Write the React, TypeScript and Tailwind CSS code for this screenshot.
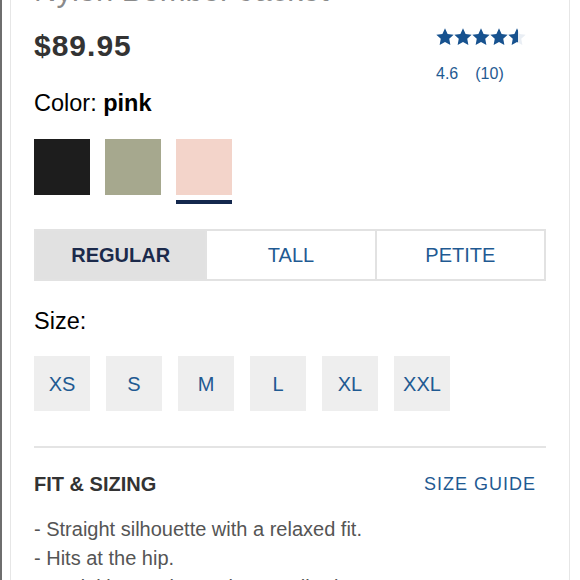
import { useId } from 'react';

const STAR = '12,2.2 15,8.6 22,9.5 16.9,14.3 18.2,21.3 12,17.9 5.8,21.3 7.1,14.3 2,9.5 9,8.6';

function Star({ fill }: { fill: number }) {
  const id = useId();
  return (
    <svg width="18" height="18" viewBox="1.6 1.8 20.8 20.8">
      <defs>
        <linearGradient id={id}>
          <stop offset={fill} stopColor="#17528f" />
          <stop offset={fill} stopColor="#e9eef4" />
        </linearGradient>
      </defs>
      <polygon points={STAR} fill={`url(#${id})`} />
    </svg>
  );
}

const swatches = [
  { name: 'black', color: 'bg-[#1d1d1d]' },
  { name: 'olive', color: 'bg-[#a6a88e]' },
  { name: 'pink', color: 'bg-[#f3d4ca]' },
];

const sizes = ['XS', 'S', 'M', 'L', 'XL', 'XXL'];

const bullets = [
  '- Straight silhouette with a relaxed fit.',
  '- Hits at the hip.',
  '- Model is wearing a size Small. Size S',
];

export default function App() {
  return (
    <div className="flex h-[580px] w-[580px] overflow-hidden bg-white font-['Liberation_Sans',Arial,sans-serif]">
      <div className="w-[2px] shrink-0 bg-[#6e6e6e]" />
      <div className="ml-[8px] w-[560px] shrink-0 border-x border-[#e6e6e6] px-[23px]">
        <h1 className="-mt-[27px] text-[31px] leading-[36px] text-[#8a8a8a]">Nylon Bomber Jacket</h1>

        <div className="mt-[19px] flex h-[61px] items-start justify-between">
          <p className="text-[30px] font-bold leading-[36px] tracking-[1px] text-[#333]">$89.95</p>
          <div className="mr-[19px] w-[91px]">
            <div className="flex">
              <Star fill={1} />
              <Star fill={1} />
              <Star fill={1} />
              <Star fill={1} />
              <Star fill={0.55} />
            </div>
            <div className="mt-[18px] flex gap-[17px] text-[16px] leading-[20px] text-[#1f5a92]">
              <span>4.6</span>
              <span>(10)</span>
            </div>
          </div>
        </div>

        <p className="text-[23.5px] leading-[28px] text-black">
          Color: <span className="font-bold">pink</span>
        </p>

        <div className="mt-[22px] flex gap-[15px]">
          {swatches.map((s) => (
            <div key={s.name} className="flex w-14 flex-col">
              <div className={`h-14 w-14 ${s.color}`} />
              <div className={`mt-[5px] h-[4px] w-14 ${s.name === 'pink' ? 'bg-[#14284d]' : 'bg-transparent'}`} />
            </div>
          ))}
        </div>

        <div className="mt-[25px] grid h-[52px] grid-cols-3 border-2 border-[#e2e2e2] text-[20px]">
          <div className="flex items-center justify-center bg-[#e1e1e1] font-bold text-[#1b2a4b]">REGULAR</div>
          <div className="flex items-center justify-center border-l-2 border-[#e2e2e2] text-[#1f5a92]">TALL</div>
          <div className="flex items-center justify-center border-l-2 border-[#e2e2e2] text-[#1f5a92]">PETITE</div>
        </div>

        <p className="mt-[26px] text-[23.5px] leading-[28px] text-black">Size:</p>

        <div className="mt-[21px] flex gap-4">
          {sizes.map((size) => (
            <div key={size} className="flex h-[55px] w-14 items-center justify-center bg-[#eeeeee] text-[20px] text-[#1f5a92]">
              {size}
            </div>
          ))}
        </div>

        <div className="mt-[35px] h-[2px] bg-[#e4e4e4]" />

        <div className="mt-[24px] flex items-center justify-between leading-[24px]">
          <h3 className="text-[20px] font-bold text-[#333]">FIT &amp; SIZING</h3>
          <span className="mr-[10px] text-[18px] tracking-[1px] text-[#1f5a92]">SIZE GUIDE</span>
        </div>

        <ul className="mt-[19px] text-[20px] leading-[29px] text-[#555]">
          {bullets.map((b) => (
            <li key={b}>{b}</li>
          ))}
        </ul>
      </div>
    </div>
  );
}
